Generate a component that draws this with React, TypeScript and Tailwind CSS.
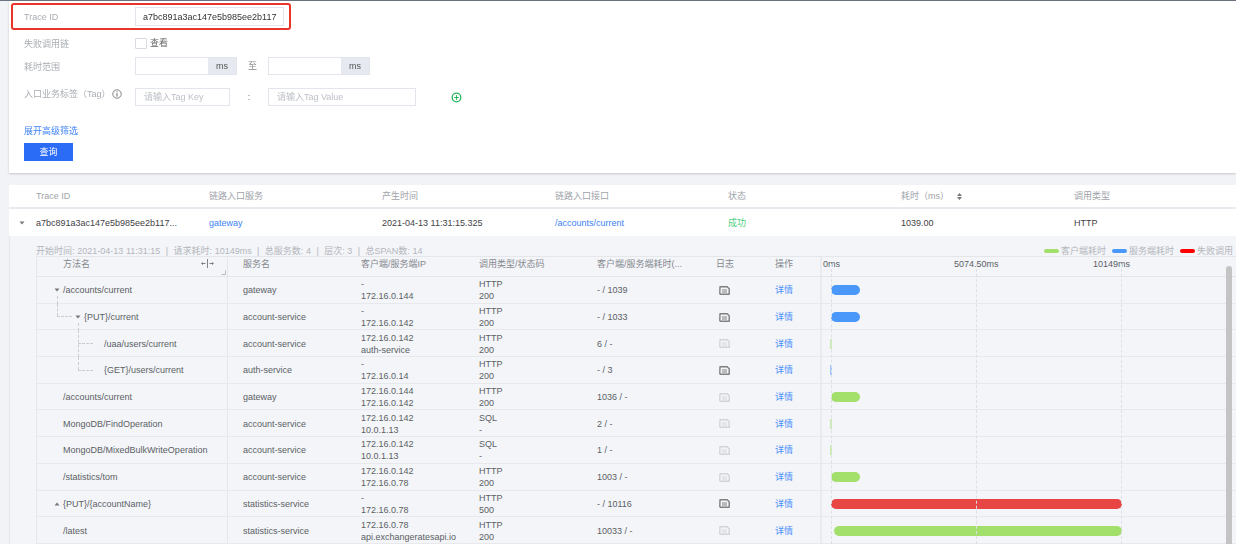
type Seg = { x: number; y: number; w?: number; h?: number }

interface Span {
  method: string
  indent: number
  caret?: 'down' | 'up'
  caretX?: number
  tree?: Seg[]
  service: string
  ip: [string, string]
  call: [string, string]
  time: string
  logDark?: boolean
  bar: { start: number; width: number; color: string }
}

const GREEN = '#a3e06b'
const BLUE = '#4b98fb'
const RED = '#e84545'

const spans: Span[] = [
  {
    method: '/accounts/current', indent: 26, caret: 'down', caretX: 17,
    tree: [{ x: 20, y: 19, h: 8 }],
    service: 'gateway', ip: ['-', '172.16.0.144'], call: ['HTTP', '200'], time: '- / 1039', logDark: true,
    bar: { start: 11, width: 29, color: BLUE },
  },
  {
    method: '{PUT}/current', indent: 47, caret: 'down', caretX: 38,
    tree: [{ x: 20, y: 0, h: 12 }, { x: 20, y: 12, w: 15 }, { x: 41, y: 19, h: 8 }],
    service: 'account-service', ip: ['-', '172.16.0.142'], call: ['HTTP', '200'], time: '- / 1033', logDark: true,
    bar: { start: 11, width: 29, color: BLUE },
  },
  {
    method: '/uaa/users/current', indent: 67,
    tree: [{ x: 41, y: 0, h: 27 }, { x: 41, y: 13, w: 15 }],
    service: 'account-service', ip: ['172.16.0.142', 'auth-service'], call: ['HTTP', '200'], time: '6 / -',
    bar: { start: 10, width: 2, color: '#c8ecaa' },
  },
  {
    method: '{GET}/users/current', indent: 67,
    tree: [{ x: 41, y: 0, h: 13 }, { x: 41, y: 13, w: 15 }],
    service: 'auth-service', ip: ['-', '172.16.0.14'], call: ['HTTP', '200'], time: '- / 3', logDark: true,
    bar: { start: 10, width: 2, color: '#a3c9fb' },
  },
  {
    method: '/accounts/current', indent: 26,
    service: 'gateway', ip: ['172.16.0.144', '172.16.0.142'], call: ['HTTP', '200'], time: '1036 / -',
    bar: { start: 11, width: 29, color: GREEN },
  },
  {
    method: 'MongoDB/FindOperation', indent: 26,
    service: 'account-service', ip: ['172.16.0.142', '10.0.1.13'], call: ['SQL', '-'], time: '2 / -',
    bar: { start: 10, width: 2, color: '#c8ecaa' },
  },
  {
    method: 'MongoDB/MixedBulkWriteOperation', indent: 26,
    service: 'account-service', ip: ['172.16.0.142', '10.0.1.13'], call: ['SQL', '-'], time: '1 / -',
    bar: { start: 10, width: 2, color: '#c8ecaa' },
  },
  {
    method: '/statistics/tom', indent: 26,
    service: 'account-service', ip: ['172.16.0.142', '172.16.0.78'], call: ['HTTP', '200'], time: '1003 / -',
    bar: { start: 11, width: 29, color: GREEN },
  },
  {
    method: '{PUT}/{accountName}', indent: 26, caret: 'up', caretX: 17,
    service: 'statistics-service', ip: ['-', '172.16.0.78'], call: ['HTTP', '500'], time: '- / 10116', logDark: true,
    bar: { start: 11, width: 291, color: RED },
  },
  {
    method: '/latest', indent: 26,
    service: 'statistics-service', ip: ['172.16.0.78', 'api.exchangeratesapi.io'], call: ['HTTP', '200'], time: '10033 / -',
    bar: { start: 14, width: 288, color: GREEN },
  },
]

const topColumns = ['Trace ID', '链路入口服务', '产生时间', '链路入口接口', '状态', '耗时（ms）', '调用类型']

function Caret({ up }: { up?: boolean }) {
  return (
    <svg width="6" height="4" viewBox="0 0 6 4" className="shrink-0">
      <path d={up ? 'M3 0.5 L5.5 3.5 L0.5 3.5 Z' : 'M0.5 0.5 L5.5 0.5 L3 3.5 Z'} fill="#777" />
    </svg>
  )
}

function LogIcon({ dark }: { dark?: boolean }) {
  const color = dark ? '#808080' : '#d2d4d8'
  return (
    <svg width="11" height="9" viewBox="0 0 11 9" fill="none">
      <path d="M1 0.8 H8.2 L10.2 2.8 V8.2 H1.8 A1 1 0 0 1 0.8 7.2 Z" stroke={color} strokeWidth="1.4" strokeLinejoin="round" />
      <path d="M3 4 H8 M3 6 H8" stroke={color} strokeWidth="1" />
    </svg>
  )
}

function FormLabel({ children }: { children: React.ReactNode }) {
  return <div className="w-[111px] shrink-0 translate-y-px text-[#a9adb3]">{children}</div>
}

function MsInput() {
  return (
    <div className="flex h-[18px] w-[102px] border border-[#e2e5eb]">
      <div className="flex-1 bg-white" />
      <div className="flex w-[28px] items-center justify-center bg-[#e6e9ef] text-[#555]">ms</div>
    </div>
  )
}

function SpanRow({ span }: { span: Span }) {
  return (
    <div className="grid h-[26.7px] grid-cols-[192px_118px_118px_118px_119px_59px_60px_402px] border-b border-[#e7e9ed] pt-px text-[#5c5f64]">
      <div className="relative -mt-px flex items-center border-x border-[#e4e6ea] pt-px" style={{ paddingLeft: span.indent }}>
        {span.tree?.map((s, i) => (
          <span
            key={i}
            className="absolute border-[#c9ccd1]"
            style={{
              left: s.x,
              top: s.y,
              width: s.w ?? 0,
              height: s.h ?? 0,
              borderLeftWidth: s.h ? 1 : 0,
              borderTopWidth: s.w ? 1 : 0,
              borderStyle: 'dashed',
            }}
          />
        ))}
        {span.caret && (
          <span className="absolute" style={{ left: span.caretX }}>
            <Caret up={span.caret === 'up'} />
          </span>
        )}
        <span>{span.method}</span>
      </div>
      <div className="flex items-center pl-[15px]">{span.service}</div>
      <div className="flex flex-col justify-center pl-[15px] leading-[12px]">
        <span>{span.ip[0]}</span>
        <span>{span.ip[1]}</span>
      </div>
      <div className="flex flex-col justify-center pl-[15px] leading-[12px]">
        <span>{span.call[0]}</span>
        <span>{span.call[1]}</span>
      </div>
      <div className="flex items-center pl-[15px]">{span.time}</div>
      <div className="flex items-center pl-[18px]">
        <LogIcon dark={span.logDark} />
      </div>
      <div className="flex items-center pl-[15px] text-[#4b8ffa]">详情</div>
      <div className="-mt-px flex items-center border-l-2 border-[#e9ebef] pt-px">
        <div
          className={span.bar.width > 3 ? 'h-[10px] rounded-full' : 'h-[10px]'}
          style={{ marginLeft: span.bar.start - 2, width: span.bar.width, backgroundColor: span.bar.color }}
        />
      </div>
    </div>
  )
}

export default function App() {
  return (
    <div className="w-[1236px] text-[9px] leading-[12px] [font-family:'Liberation_Sans','Noto_Sans_CJK_SC',sans-serif] blur-[0.5px]">
      <div className="bg-[#f1f3f7]">
        <div className="h-px bg-[#6b7280]" />

        {/* filter form */}
        <div className="relative ml-[9px] h-[172px] bg-white pl-[15px] pt-[6px] shadow-[0_1px_2px_rgba(0,0,0,0.18)]">
          <div className="absolute left-[2px] top-[2px] h-[27px] w-[280px] rounded-[3px] border-2 border-[#e8352b]" />
          <div className="flex h-[19px] items-center">
            <div className="w-[111px] shrink-0 text-[#a9adb3]">Trace ID</div>
            <div className="flex h-[19px] w-[149px] items-center border border-[#e2e5eb] pl-[7px] text-[#333]">
              a7bc891a3ac147e5b985ee2b117
            </div>
          </div>
          <div className="mt-[12px] flex h-[10px] items-center">
            <FormLabel>失败调用链</FormLabel>
            <div className="h-[11px] w-[12px] rounded-[1px] border border-[#d8dbe1]" />
            <span className="ml-[3px] text-[#666]">查看</span>
          </div>
          <div className="mt-[9px] flex h-[18px] items-center">
            <FormLabel>耗时范围</FormLabel>
            <MsInput />
            <span className="w-[31px] text-center text-[#888]">至</span>
            <MsInput />
          </div>
          <div className="mt-[13px] flex h-[18px] items-center">
            <div className="flex w-[111px] shrink-0 -translate-y-[3px] items-center text-[#a9adb3]">
              <span>入口业务标签（Tag）</span>
              <svg width="10" height="10" viewBox="0 0 10 10" fill="none" className="ml-[1px]">
                <circle cx="5" cy="5" r="4.2" stroke="#666" strokeWidth="0.8" />
                <path d="M5 4.3 V7.6 M5 2.4 V3.4" stroke="#666" strokeWidth="1" />
              </svg>
            </div>
            <div className="flex h-[18px] w-[95px] items-center border border-[#e2e5eb] pl-[8px] text-[#bdc0c6]">请输入Tag Key</div>
            <span className="w-[38px] text-center text-[#777]">:</span>
            <div className="flex h-[18px] w-[148px] items-center border border-[#e2e5eb] pl-[8px] text-[#bdc0c6]">请输入Tag Value</div>
            <svg width="11" height="11" viewBox="0 0 11 11" fill="none" className="ml-[35px]">
              <circle cx="5.5" cy="5.5" r="4.3" stroke="#27b35a" strokeWidth="1.3" />
              <path d="M3.2 5.5 H7.8 M5.5 3.2 V7.8" stroke="#27b35a" strokeWidth="1.1" />
            </svg>
          </div>
          <div className="mt-[19px] h-[12px] text-[#3c82f6]">展开高级筛选</div>
          <div className="mt-[6px] flex h-[18px] w-[49px] items-center justify-center bg-[#2b6cf6] text-white">查询</div>
        </div>

        {/* trace list */}
        <div className="ml-[9px] mt-[12px]">
          <div className="grid h-[24px] grid-cols-[27px_repeat(6,173px)_1fr] items-center border-b-2 border-[#e8eaf0] bg-white text-[#a0a3a9]">
            <span />
            {topColumns.map((c) => (
              <div key={c} className="flex items-center">
                {c}
                {c.startsWith('耗时') && (
                  <svg width="5" height="7" viewBox="0 0 5 7" className="ml-[8px]">
                    <path d="M2.5 0 L5 3 H0 Z M2.5 7 L0 4 H5 Z" fill="#777" />
                  </svg>
                )}
              </div>
            ))}
          </div>
          <div className="grid h-[27px] grid-cols-[27px_repeat(6,173px)_1fr] items-center bg-white text-[#3f4246]">
            <div className="pl-[10px]">
              <Caret />
            </div>
            <div>a7bc891a3ac147e5b985ee2b117...</div>
            <div className="text-[#3c82f6]">gateway</div>
            <div>2021-04-13 11:31:15.325</div>
            <div className="text-[#3c82f6]">/accounts/current</div>
            <div className="text-[#4fcf7f]">成功</div>
            <div>1039.00</div>
            <div>HTTP</div>
          </div>

          {/* expanded detail */}
          <div className="border-l border-[#e4e6ea] bg-[#f3f5f9]">
            <div className="flex h-[20px] items-start justify-between pl-[26px] pr-[3px] pt-[9px] text-[#b3b6bb]">
              <div className="whitespace-pre [word-spacing:0.2px]">
                开始时间: 2021-04-13 11:31:15  |  请求耗时: 10149ms  |  总服务数: 4  |  层次: 3  |  总SPAN数: 14
              </div>
              <div className="flex items-center">
                <span className="h-[4px] w-[15px] rounded-full bg-[#a3e06b]" />
                <span className="ml-[2px]">客户端耗时</span>
                <span className="ml-[6px] h-[4px] w-[15px] rounded-full bg-[#4b98fb]" />
                <span className="ml-[2px]">服务端耗时</span>
                <span className="ml-[6px] h-[4px] w-[15px] rounded-full bg-[#f00]" />
                <span className="ml-[2px]">失败调用</span>
              </div>
            </div>

            <div className="relative ml-[26px]">
              <div className="grid h-[21px] grid-cols-[192px_118px_118px_118px_119px_59px_60px_402px] border-y border-[#e4e6ea] text-[#85888e]">
                <div className="relative border-x border-[#e4e6ea] pl-[26px] pt-[1px]">
                  方法名
                  <svg width="13" height="9" viewBox="0 0 13 9" fill="none" className="absolute left-[164px] top-[2px]">
                    <path d="M6.5 0 V9 M1 4.5 H4.5 M8.5 4.5 H12" stroke="#777" strokeWidth="0.9" />
                    <path d="M0 4.5 L2 3 V6 Z M13 4.5 L11 3 V6 Z" fill="#777" />
                  </svg>
                  <svg width="5" height="5" viewBox="0 0 5 5" fill="none" className="absolute bottom-[1px] right-[1px]">
                    <path d="M4.5 0.5 V4.5 H0.5" stroke="#aaa" strokeWidth="0.8" />
                  </svg>
                </div>
                <div className="pl-[15px] pt-[1px]">服务名</div>
                <div className="pl-[15px] pt-[1px]">客户端/服务端IP</div>
                <div className="pl-[15px] pt-[1px]">调用类型/状态码</div>
                <div className="pl-[15px] pt-[1px]">客户端/服务端耗时(...</div>
                <div className="pl-[15px] pt-[1px]">日志</div>
                <div className="pl-[15px] pt-[1px]">操作</div>
                <div className="relative border-l-2 border-[#e9ebef] pl-[1px] pt-[1px] text-[#5c5f64]">
                  <span>0ms</span>
                  <span className="absolute left-[132px] top-[1px]">5074.50ms</span>
                  <span className="absolute left-[271px] top-[1px]">10149ms</span>
                </div>
              </div>
              {spans.map((s, i) => (
                <SpanRow key={i} span={s} />
              ))}

              {/* time axis guides */}
              <span className="absolute bottom-0 left-[795px] top-[8px] border-l border-dashed border-[#dcdfe4]" />
              <span className="absolute bottom-0 left-[940px] top-[8px] border-l border-dashed border-[#dcdfe4]" />
              <span className="absolute bottom-0 left-[1085px] top-[8px] border-l border-dashed border-[#dcdfe4]" />
              {/* scrollbar */}
              <span className="absolute bottom-0 left-[1190px] top-[10px] w-[6px] rounded-t-[3px] bg-[#c4c4c4]" />
            </div>
          </div>
        </div>
      </div>
    </div>
  )
}
